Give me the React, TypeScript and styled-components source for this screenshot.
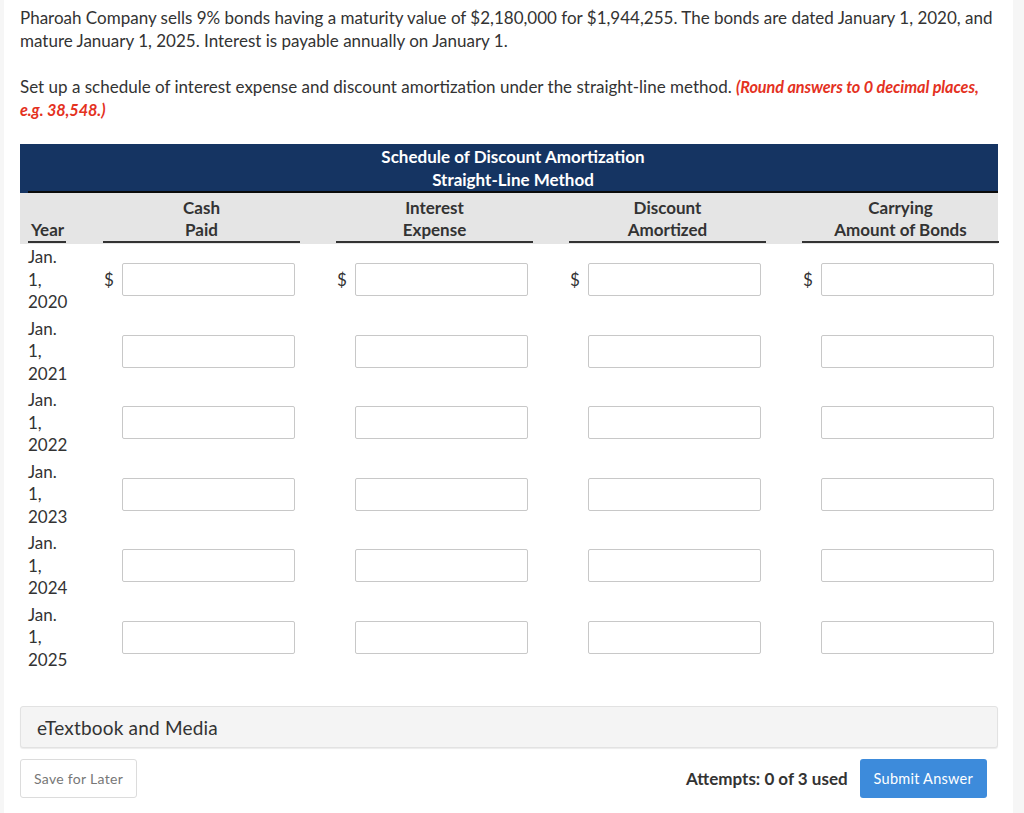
import { FunctionComponent } from "react";
import styled, { createGlobalStyle } from "styled-components";

const GlobalStyle = createGlobalStyle`
  html, body {
    margin: 0;
    padding: 0;
    background: #f6f6f6;
  }
  body {
    font-family: Lato, "Noto Sans", "Liberation Sans", sans-serif;
    color: #333;
  }
`;

const Page = styled.div`
  margin-left: 4px;
  width: 1009px;
  min-height: 813px;
  background: #fff;
  box-sizing: border-box;
  padding: 6px 0 0 16px;
`;

const Question = styled.p`
  margin: 0;
  font-size: 17px;
  line-height: 23px;
  width: 980px;
`;

const Instruction = styled.p`
  margin: 24px 0 0;
  font-size: 17px;
  line-height: 22.5px;
  width: 975px;
`;

const Hint = styled.span`
  color: #e4321f;
  font-size: 16.3px;
  font-weight: 700;
  font-style: italic;
  letter-spacing: -0.1px;
`;

const Schedule = styled.div`
  margin-top: 23px;
  width: 978px;
`;

const TitleBand = styled.div`
  background: #153462;
  color: #fff;
  padding: 1px 0 0 8px;
`;

const Title = styled.div`
  text-align: center;
  font-size: 17px;
  font-weight: 700;
  line-height: 23px;
  border-bottom: 2px solid #0b0b0b;
`;

const columns = "75px 233px 233px 233px 204px";

const HeaderRow = styled.div`
  display: grid;
  grid-template-columns: ${columns};
  align-items: end;
  background: #e5e5e5;
  padding: 3px 0 1px;
  font-size: 17px;
  font-weight: 700;
  line-height: 22px;
`;

const YearHead = styled.div`
  padding-left: 8px;
`;

const YearLabel = styled.span`
  display: inline-block;
  padding: 1px 2px 0 3px;
  border-bottom: 2px solid #333;
`;

const ColumnLabel = styled.div`
  margin-left: 8px;
  width: 197px;
  padding-top: 1px;
  text-align: center;
  border-bottom: 2px solid #333;
`;

const BodyRow = styled.div`
  display: grid;
  grid-template-columns: ${columns};
  align-items: center;
  padding: 2px 0;
`;

const YearCell = styled.div`
  padding-left: 8px;
  width: 42px;
  font-size: 17px;
  line-height: 22.5px;
`;

const ValueCell = styled.div`
  display: flex;
  align-items: center;
`;

const Dollar = styled.span`
  width: 28px;
  box-sizing: border-box;
  padding-left: 9px;
  font-size: 17px;
  color: #333;
`;

const AmountInput = styled.input`
  width: 173px;
  height: 33px;
  box-sizing: border-box;
  margin: 0 0 0 -1px;
  border: 1px solid #c8c8c8;
  border-radius: 2px;
  background: #fff;
  font-family: inherit;
  font-size: 15px;
  padding: 0 6px;
`;

const MediaBox = styled.div`
  margin-top: 33px;
  width: 978px;
  height: 42px;
  box-sizing: border-box;
  display: flex;
  align-items: center;
  padding-left: 16px;
  background: #f4f4f4;
  border: 1px solid #e2e2e2;
  border-radius: 3px;
  box-shadow: 0 1px 1px rgba(0, 0, 0, 0.08);
  font-size: 19px;
  letter-spacing: 0.2px;
  color: #333;
`;

const Footer = styled.div`
  margin-top: 11px;
  width: 967px;
  display: flex;
  align-items: center;
  justify-content: space-between;
`;

const SaveButton = styled.button`
  height: 39px;
  padding: 0 13px;
  background: #fff;
  border: 1px solid #dcdcdc;
  border-radius: 3px;
  font-family: inherit;
  font-size: 14px;
  letter-spacing: 0.3px;
  color: #777;
`;

const SubmitGroup = styled.div`
  display: flex;
  align-items: center;
  gap: 12px;
`;

const Attempts = styled.span`
  font-size: 17px;
  font-weight: 700;
  color: #333;
`;

const SubmitButton = styled.button`
  height: 39px;
  padding: 0 14px;
  background: #3d8bdb;
  border: none;
  border-radius: 3px;
  font-family: inherit;
  font-size: 14.5px;
  letter-spacing: 0.25px;
  color: #fff;
`;

const headers = [
  ["Cash", "Paid"],
  ["Interest", "Expense"],
  ["Discount", "Amortized"],
  ["Carrying", "Amount of Bonds"],
];

const years = ["2020", "2021", "2022", "2023", "2024", "2025"];

const App: FunctionComponent = () => {
  return (
    <>
      <GlobalStyle />
      <Page>
        <Question>
          Pharoah Company sells 9% bonds having a maturity value of $2,180,000 for
          $1,944,255. The bonds are dated January 1, 2020, and mature January 1, 2025.
          Interest is payable annually on January 1.
        </Question>
        <Instruction>
          Set up a schedule of interest expense and discount amortization under the
          straight-line method.{" "}
          <Hint>(Round answers to 0 decimal places, e.g. 38,548.)</Hint>
        </Instruction>

        <Schedule>
          <TitleBand>
            <Title>
              Schedule of Discount Amortization
              <br />
              Straight-Line Method
            </Title>
          </TitleBand>
          <HeaderRow>
            <YearHead>
              <YearLabel>Year</YearLabel>
            </YearHead>
            {headers.map(([top, bottom]) => (
              <ColumnLabel key={top}>
                {top}
                <br />
                {bottom}
              </ColumnLabel>
            ))}
          </HeaderRow>
          {years.map((year, i) => (
            <BodyRow key={year}>
              <YearCell>Jan. 1, {year}</YearCell>
              {headers.map(([top]) => (
                <ValueCell key={top}>
                  <Dollar>{i === 0 ? "$" : ""}</Dollar>
                  <AmountInput type="text" />
                </ValueCell>
              ))}
            </BodyRow>
          ))}
        </Schedule>

        <MediaBox>eTextbook and Media</MediaBox>

        <Footer>
          <SaveButton>Save for Later</SaveButton>
          <SubmitGroup>
            <Attempts>Attempts: 0 of 3 used</Attempts>
            <SubmitButton>Submit Answer</SubmitButton>
          </SubmitGroup>
        </Footer>
      </Page>
    </>
  );
};

export default App;
